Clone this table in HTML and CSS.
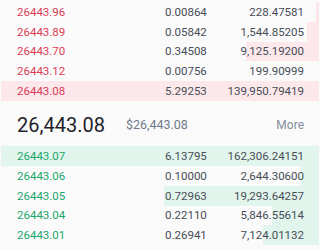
FILE: index.html
```html
<!DOCTYPE html>
<html>
<head>
<meta charset="utf-8">
<link rel="stylesheet" href="styles.css">
</head>
<body>
<div class="book">
  <div class="side asks">
    <div class="row" style="--depth:1%"><span class="price">26443.96</span><span class="amt">0.00864</span><span class="total">228.47581</span></div>
    <div class="row" style="--depth:12px"><span class="price">26443.89</span><span class="amt">0.05842</span><span class="total">1,544.85205</span></div>
    <div class="row" style="--depth:73px"><span class="price">26443.70</span><span class="amt">0.34508</span><span class="total">9,125.19200</span></div>
    <div class="row" style="--depth:0px"><span class="price">26443.12</span><span class="amt">0.00756</span><span class="total">199.90999</span></div>
    <div class="row" style="--depth:100%"><span class="price">26443.08</span><span class="amt">5.29253</span><span class="total">139,950.79419</span></div>
  </div>
  <div class="ticker">
    <span class="last">26,443.08</span>
    <span class="usd">$26,443.08</span>
    <span class="more">More</span>
  </div>
  <div class="side bids">
    <div class="row" style="--depth:100%"><span class="price">26443.07</span><span class="amt">6.13795</span><span class="total">162,306.24151</span></div>
    <div class="row" style="--depth:18px"><span class="price">26443.06</span><span class="amt">0.10000</span><span class="total">2,644.30600</span></div>
    <div class="row" style="--depth:155px"><span class="price">26443.05</span><span class="amt">0.72963</span><span class="total">19,293.64257</span></div>
    <div class="row" style="--depth:47px"><span class="price">26443.04</span><span class="amt">0.22110</span><span class="total">5,846.55614</span></div>
    <div class="row" style="--depth:56px"><span class="price">26443.01</span><span class="amt">0.26941</span><span class="total">7,124.01132</span></div>
  </div>
</div>
</body>
</html>
```
FILE: styles.css
```css
html, body {
  margin: 0;
  padding: 0;
  background: #fafafa;
}
body {
  font-family: Roboto, "Noto Sans", sans-serif;
  width: 320px;
  height: 250px;
  overflow: hidden;
}
.book {
  display: flex;
  flex-direction: column;
  padding: 2px 1px 0 1px;
}
.side {
  display: flex;
  flex-direction: column;
}
.row {
  display: grid;
  grid-template-columns: 148px 1fr auto;
  align-items: center;
  height: 19.75px;
  padding: 0 15px 0 16px;
  font-size: 11.5px;
  color: #474d57;
}
.asks .row {
  background: linear-gradient(to left, #fce8eb var(--depth), transparent var(--depth));
}
.bids .row {
  background: linear-gradient(to left, #e2f5ec var(--depth), transparent var(--depth));
}
.asks .price { color: #dc3a55; }
.bids .price { color: #1ba66d; }
.total { text-align: right; }
.ticker {
  display: flex;
  align-items: center;
  height: 45.5px;
  padding: 2px 15px 0 16px;
  box-sizing: border-box;
}
.last {
  font-size: 20px;
  color: #1e2329;
}
.usd {
  margin-left: 21px;
  font-size: 12.5px;
  color: #707a8a;
}
.more {
  margin-left: auto;
  font-size: 12px;
  color: #848e9c;
}
```
